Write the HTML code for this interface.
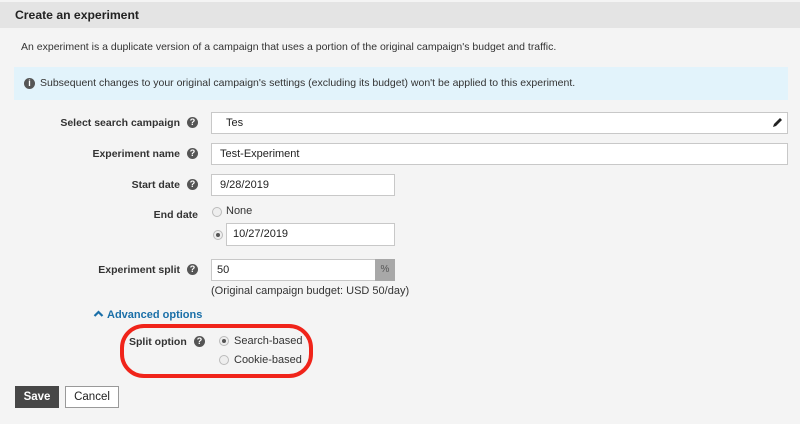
<!DOCTYPE html>
<html><head><style>
body{margin:0;width:800px;height:428px;background:#fff;font-family:"Liberation Sans",Arial,sans-serif;font-size:10.5px;color:#333;position:relative;overflow:hidden}
.a{position:absolute}
.bg{left:0;top:0;width:800px;height:424px;background:#f4f4f4}
.hd{left:0;top:2px;width:800px;height:26px;background:#e4e4e4;font-weight:bold;font-size:12.2px;line-height:26px;padding-left:15px;box-sizing:border-box;color:#222}
.lbl{font-weight:bold;text-align:right;width:200px;color:#333}
.inp{background:#fff;border:1px solid #c8c8c8;box-sizing:border-box;padding-left:8px;line-height:20px;color:#222;font-size:11px}
.q{width:11px;height:11px;border-radius:50%;background:#555;color:#fff;font-size:9px;font-weight:bold;text-align:center;line-height:11px}
.r{width:10px;height:10px;border-radius:50%;border:1px solid #bbb;background:#eee;box-sizing:border-box}
.r.on::after{content:"";position:absolute;left:2px;top:2px;width:4px;height:4px;border-radius:50%;background:#555}
</style></head><body>
<div class="a bg"></div>
<div class="a hd">Create an experiment</div>
<div class="a" style="left:21px;top:41px;color:#333">An experiment is a duplicate version of a campaign that uses a portion of the original campaign's budget and traffic.</div>
<div class="a" style="left:14px;top:67px;width:774px;height:33px;background:#e2f3fb"></div>
<div class="a q" style="left:24px;top:78px">i</div>
<div class="a" style="left:40px;top:77px;color:#333">Subsequent changes to your original campaign's settings (excluding its budget) won't be applied to this experiment.</div>

<div class="a lbl" style="left:-20px;top:117px">Select search campaign</div>
<div class="a q" style="left:187px;top:117px">?</div>
<div class="a inp" style="left:211px;top:112px;width:577px;height:22px;padding-left:14px">Tes</div>
<svg class="a" style="left:770px;top:115px" width="14" height="14"><path d="M3 12 L4 9 L10 3 L12 5 L6 11 Z" fill="#222"/></svg>

<div class="a lbl" style="left:-20px;top:148px">Experiment name</div>
<div class="a q" style="left:187px;top:148px">?</div>
<div class="a inp" style="left:211px;top:143px;width:577px;height:22px">Test-Experiment</div>

<div class="a lbl" style="left:-20px;top:179px">Start date</div>
<div class="a q" style="left:187px;top:179px">?</div>
<div class="a inp" style="left:211px;top:174px;width:184px;height:22px">9/28/2019</div>

<div class="a lbl" style="left:-2px;top:209px">End date</div>
<div class="a r" style="left:212px;top:207px"></div>
<div class="a" style="left:226px;top:205px;font-size:11px">None</div>
<div class="a r on" style="left:213px;top:230px"></div>
<div class="a inp" style="left:226px;top:223px;width:169px;height:23px;padding-left:6px">10/27/2019</div>

<div class="a lbl" style="left:-20px;top:264px">Experiment split</div>
<div class="a q" style="left:187px;top:264px">?</div>
<div class="a inp" style="left:211px;top:259px;width:165px;height:22px;padding-left:5px">50</div>
<div class="a" style="left:375px;top:259px;width:20px;height:22px;background:#a8a8a8;color:#555;font-size:10px;text-align:center;line-height:22px">%</div>
<div class="a" style="left:211px;top:285px;color:#333;font-size:11px">(Original campaign budget: USD 50/day)</div>

<svg class="a" style="left:93px;top:309px" width="11" height="9"><path d="M1.5 7 L5.5 3 L9.5 7" stroke="#1a6fa8" stroke-width="2.2" fill="none"/></svg>
<div class="a" style="left:107px;top:309px;color:#1a6fa8;font-weight:bold;font-size:11px">Advanced options</div>

<div class="a" style="left:120px;top:324px;width:193px;height:54px;border:4px solid #f0241a;border-radius:24px;box-sizing:border-box"></div>
<div class="a" style="left:129px;top:336px;font-weight:bold">Split option</div>
<div class="a q" style="left:194px;top:336px">?</div>
<div class="a r on" style="left:219px;top:336px"></div>
<div class="a" style="left:234px;top:335px;font-size:11px">Search-based</div>
<div class="a r" style="left:219px;top:355px"></div>
<div class="a" style="left:234px;top:354px;font-size:11px">Cookie-based</div>

<div class="a" style="left:15px;top:386px;width:44px;height:22px;background:#474747;color:#fff;font-weight:bold;text-align:center;line-height:22px;font-size:11.5px">Save</div>
<div class="a" style="left:65px;top:386px;width:54px;height:22px;background:#fff;border:1px solid #999;box-sizing:border-box;text-align:center;line-height:20px;color:#222;font-size:11.5px">Cancel</div>
</body></html>
